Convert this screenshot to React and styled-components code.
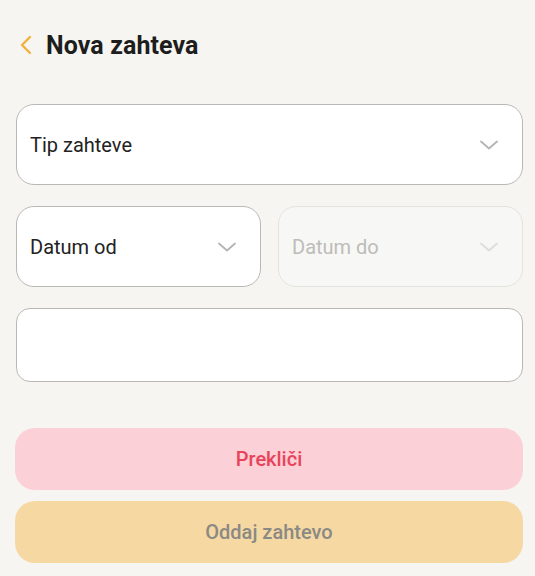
import React from 'react';
import styled, { createGlobalStyle } from 'styled-components';

const GlobalStyle = createGlobalStyle`
  body {
    margin: 0;
    background: #f6f5f1;
    font-family: Roboto, "Noto Sans", sans-serif;
  }
`;

const Page = styled.div`
  width: 535px;
  min-height: 576px;
  box-sizing: border-box;
  padding: 0 12px 0 16px;
  display: flex;
  flex-direction: column;
`;

const Header = styled.div`
  height: 90px;
  display: flex;
  align-items: center;
  gap: 13px;
  padding-left: 3px;
`;

const BackButton = styled.button`
  border: none;
  background: none;
  padding: 0;
  display: flex;
  align-items: center;
  cursor: pointer;
`;

const Title = styled.h1`
  margin: 0;
  font-size: 25px;
  font-weight: 700;
  color: #1d1d1d;
  letter-spacing: 0.1px;
`;

const Form = styled.div`
  margin-top: 14px;
  display: flex;
  flex-direction: column;
  gap: 21px;
`;

const Row = styled.div`
  display: grid;
  grid-template-columns: 1fr 1fr;
  gap: 17px;
`;

const Select = styled.div`
  height: 81px;
  box-sizing: border-box;
  border-radius: 18px;
  border: 1px solid ${(p) => (p.$disabled ? '#e4e3df' : '#b9b8b4')};
  background: ${(p) => (p.$disabled ? '#f7f7f5' : '#ffffff')};
  display: flex;
  align-items: center;
  justify-content: space-between;
  padding: 0 24px 0 13px;
  font-size: 20px;
  color: ${(p) => (p.$disabled ? '#bdbcb9' : '#222222')};
`;

const Chevron = styled.svg`
  width: 18px;
  height: 10px;
  fill: none;
  stroke: ${(p) => (p.$disabled ? '#dcdcda' : '#b4b4b2')};
  stroke-width: 1.8;
  stroke-linecap: round;
  stroke-linejoin: round;
`;

const TextArea = styled.textarea`
  height: 74px;
  box-sizing: border-box;
  border-radius: 14px;
  border: 1px solid #b9b8b4;
  background: #fff;
  resize: none;
  padding: 12px 14px;
  font-family: inherit;
  font-size: 18px;
  outline: none;
`;

const Actions = styled.div`
  margin-top: 46px;
  display: flex;
  flex-direction: column;
  gap: 11px;
  margin-left: -1px;
`;

const ActionButton = styled.button`
  height: 62px;
  border: none;
  border-radius: 20px;
  background: ${(p) => p.$bg};
  color: ${(p) => p.$color};
  font-family: inherit;
  font-size: 20px;
  font-weight: 500;
  cursor: pointer;
`;

const ChevronDown = ({ disabled }) => (
  <Chevron $disabled={disabled} viewBox="0 0 18 10">
    <path d="M1 1.5 L9 8.5 L17 1.5" />
  </Chevron>
);

export default function App() {
  return (
    <>
      <GlobalStyle />
      <Page>
        <Header>
          <BackButton aria-label="Nazaj">
            <svg width="14" height="22" viewBox="0 0 14 22" fill="none">
              <path d="M11 3 L3 11 L11 19" stroke="#f2b13c" strokeWidth="2.4" strokeLinecap="round" strokeLinejoin="round" />
            </svg>
          </BackButton>
          <Title>Nova zahteva</Title>
        </Header>
        <Form>
          <Select>
            Tip zahteve
            <ChevronDown />
          </Select>
          <Row>
            <Select>
              Datum od
              <ChevronDown />
            </Select>
            <Select $disabled>
              Datum do
              <ChevronDown disabled />
            </Select>
          </Row>
          <TextArea />
        </Form>
        <Actions>
          <ActionButton $bg="#fbd0d6" $color="#e9435c">Prekliči</ActionButton>
          <ActionButton $bg="#f6d8a3" $color="#8a8983">Oddaj zahtevo</ActionButton>
        </Actions>
      </Page>
    </>
  );
}
